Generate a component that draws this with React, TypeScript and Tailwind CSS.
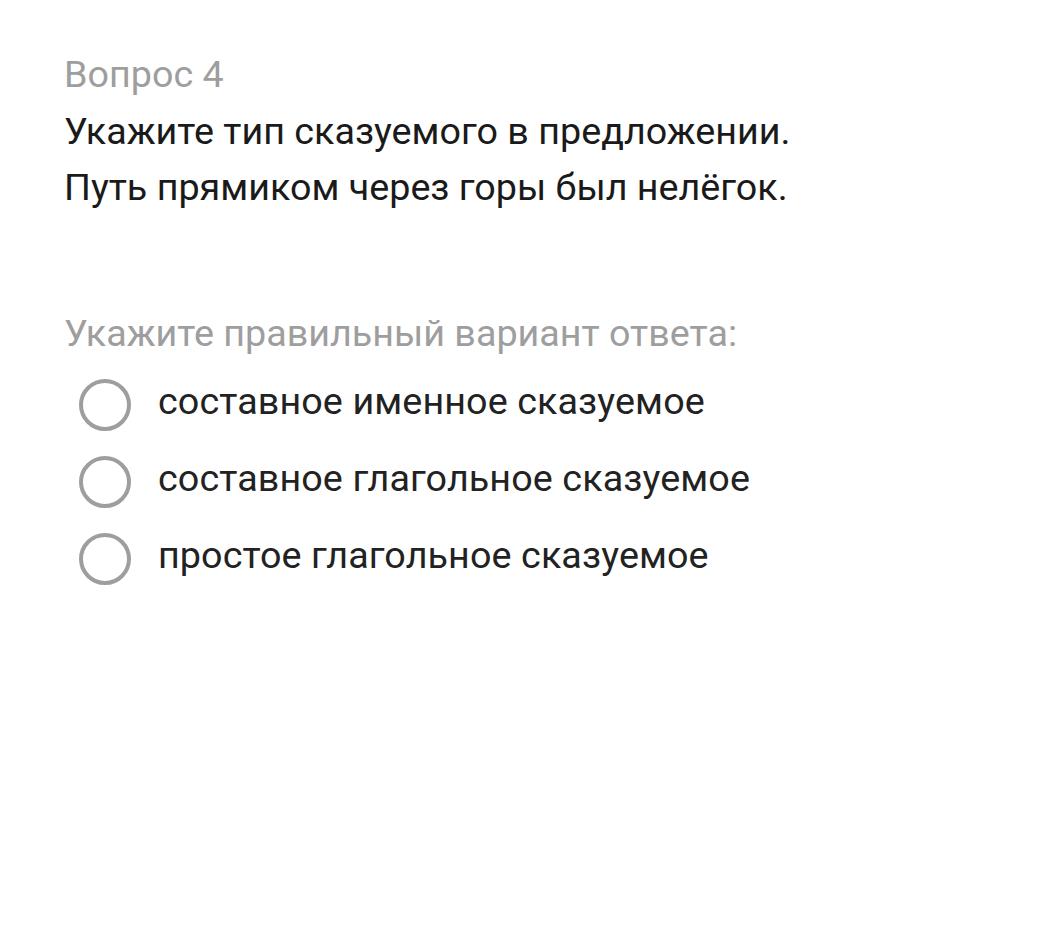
export default function App() {
  const options = [
    "составное именное сказуемое",
    "составное глагольное сказуемое",
    "простое глагольное сказуемое",
  ];

  return (
    <div className="min-h-screen w-full bg-white font-['Roboto',sans-serif] pl-[64px] pt-[52px]">
      <div className="text-[37.7px] leading-[44px] text-[#9e9e9e]">Вопрос 4</div>
      <div className="mt-[7px] text-[37.7px] leading-[56px] text-[#1a1a1a]">
        <div>Укажите тип сказуемого в предложении.</div>
        <div>Путь прямиком через горы был нелёгок.</div>
      </div>
      <div className="mt-[96px] text-[37.7px] leading-[44px] text-[#9e9e9e]">
        Укажите правильный вариант ответа:
      </div>
      <div className="mt-[11px] flex flex-col">
        {options.map((o) => (
          <label key={o} className="flex h-[77px] items-center">
            <span className="ml-[15px] h-[52px] w-[52px] shrink-0 rounded-full border-[4.5px] border-[#9e9e9e]" />
            <span className="ml-[27px] -mt-[6px] text-[37.7px] tracking-[0.1px] text-[#222]">{o}</span>
          </label>
        ))}
      </div>
    </div>
  );
}
